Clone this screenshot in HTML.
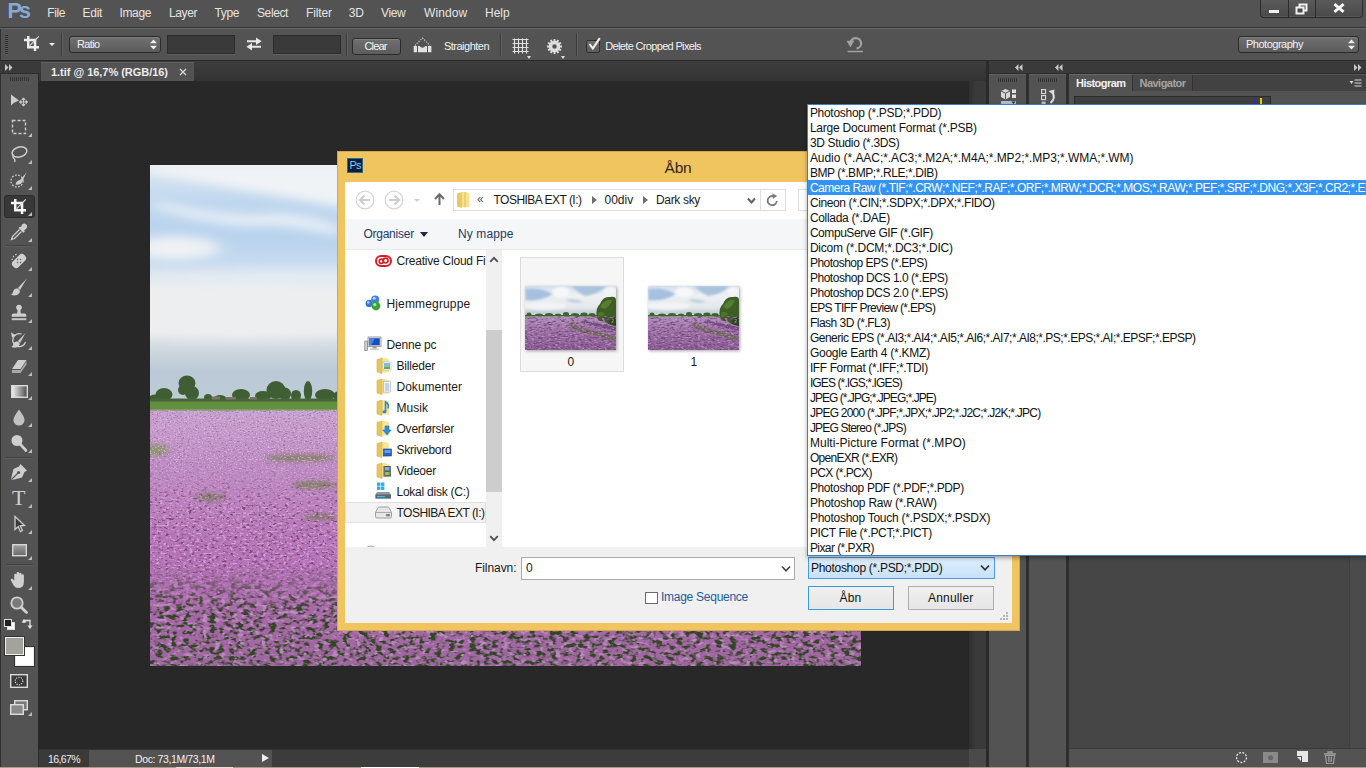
<!DOCTYPE html>
<html lang="da">
<head>
<meta charset="utf-8">
<title>Photoshop - Åbn</title>
<style>
*{box-sizing:border-box;margin:0;padding:0}
html,body{width:1366px;height:768px;overflow:hidden;background:#282828}
body{font-family:"Liberation Sans","DejaVu Sans",sans-serif;font-size:12px;color:#e6e6e6;position:relative}
.abs{position:absolute}
.t{position:absolute;white-space:nowrap}
svg{position:absolute;overflow:visible}
.sel{position:absolute;background:linear-gradient(#707070,#5c5c5c);border:1px solid #2b2b2b;border-radius:3px;box-shadow:inset 0 1px 0 rgba(255,255,255,.12)}
.dark{position:absolute;background:#3a3a3a;border:1px solid #2c2c2c;box-shadow:0 1px 0 rgba(255,255,255,.08)}
.vsep{position:absolute;width:2px;border-left:1px solid #3c3c3c;border-right:1px solid #626262}
.hsep{position:absolute;height:2px;border-top:1px solid #434343;border-bottom:1px solid #5e5e5e}
.tri{position:absolute;width:0;height:0;border-left:4px solid transparent;border-bottom:4px solid #bdbdbd}
</style>
</head>
<body>

<!-- MENU BAR -->
<div class="abs" style="left:0px;top:0px;width:1366px;height:28px;background:#535353;border-bottom:1px solid #353535"></div>
<div class="t" style="left:7.5px;top:-0.75px;font-size:21.5px;line-height:25.5px;color:#86a9d8;font-weight:bold;letter-spacing:-2.899px;">Ps</div>
<div class="t" style="left:47.3px;top:5px;font-size:12px;line-height:16px;color:#e4e4e4;letter-spacing:-0.409px;">File</div>
<div class="t" style="left:82.6px;top:5px;font-size:12px;line-height:16px;color:#e4e4e4;letter-spacing:-0.320px;">Edit</div>
<div class="t" style="left:119.5px;top:5px;font-size:12px;line-height:16px;color:#e4e4e4;letter-spacing:-0.371px;">Image</div>
<div class="t" style="left:169px;top:5px;font-size:12px;line-height:16px;color:#e4e4e4;letter-spacing:-0.404px;">Layer</div>
<div class="t" style="left:214.5px;top:5px;font-size:12px;line-height:16px;color:#e4e4e4;letter-spacing:-0.379px;">Type</div>
<div class="t" style="left:257px;top:5px;font-size:12px;line-height:16px;color:#e4e4e4;letter-spacing:-0.392px;">Select</div>
<div class="t" style="left:306px;top:5px;font-size:12px;line-height:16px;color:#e4e4e4;letter-spacing:-0.111px;">Filter</div>
<div class="t" style="left:348.7px;top:5px;font-size:12px;line-height:16px;color:#e4e4e4;letter-spacing:-0.020px;">3D</div>
<div class="t" style="left:381px;top:5px;font-size:12px;line-height:16px;color:#e4e4e4;letter-spacing:-0.349px;">View</div>
<div class="t" style="left:424px;top:5px;font-size:12px;line-height:16px;color:#e4e4e4;letter-spacing:0.120px;">Window</div>
<div class="t" style="left:485px;top:5px;font-size:12px;line-height:16px;color:#e4e4e4;letter-spacing:0.005px;">Help</div>
<div class="abs" style="left:1260px;top:0px;width:103px;height:18px;background:linear-gradient(#5a5a5a,#4a4a4a);border:1px solid #2c2c2c;border-top:none;border-radius:0 0 4px 4px;box-shadow:inset 0 -1px 0 rgba(255,255,255,.08)"></div>
<div class="abs" style="left:1288px;top:0px;width:1px;height:17px;background:#2c2c2c"></div>
<div class="abs" style="left:1315px;top:0px;width:1px;height:17px;background:#2c2c2c"></div>
<div class="abs" style="left:1269px;top:10px;width:10px;height:3px;background:#f0f0f0"></div>
<svg style="left:1295px;top:3px" width="14" height="12" viewBox="0 0 14 12"><rect x="4.5" y="1.5" width="7" height="6" fill="none" stroke="#f0f0f0" stroke-width="2"/><rect x="1.5" y="4.5" width="7" height="6" fill="#4b4b4b" stroke="#f0f0f0" stroke-width="2"/></svg>
<svg style="left:1333px;top:3px" width="12" height="11" viewBox="0 0 12 11"><path d="M1.4 1.2 L10.6 8.8 M10.6 1.2 L1.4 8.8" stroke="#f4f4f4" stroke-width="2.9" fill="none"/></svg>
<!-- OPTIONS BAR -->
<div class="abs" style="left:0px;top:28px;width:1366px;height:33px;background:#535353;border-top:1px solid #676767;border-bottom:1px solid #2a2a2a"></div>
<div class="abs" style="left:5px;top:35px;width:3px;height:20px;background:repeating-linear-gradient(#2c2c2c 0 1px,#5c5c5c 1px 2px)"></div>
<svg style="left:24px;top:35.5px" width="15" height="15" viewBox="0 0 15 15"><path d="M3 0H5.5V10H15V12.5H3Z M0 2.7H12.3V15H9.8V5.2H0Z" fill="#ececec"/><path d="M5.8 9.7 L14.8 0.4" stroke="#dcdcdc" stroke-width="1.1"/></svg>
<div class="abs" style="left:49px;top:42.7px;width:0px;height:0px;border-left:3.3px solid transparent;border-right:3.3px solid transparent;border-top:3.6px solid #efefef"></div>
<div class="vsep" style="left:61px;top:33px;height:23px"></div>
<div class="sel" style="left:69px;top:36px;width:92px;height:17px"></div>
<div class="t" style="left:77px;top:37px;font-size:11px;line-height:15px;color:#f2f2f2;letter-spacing:-0.636px;">Ratio</div>
<svg style="left:150px;top:39px" width="7" height="11" viewBox="0 0 7 11"><path d="M0 4.2 L3.5 0.5 L7 4.2Z M0 6.8 L3.5 10.5 L7 6.8Z" fill="#f0f0f0"/></svg>
<div class="dark" style="left:167px;top:35px;width:68px;height:19px"></div>
<svg style="left:246px;top:37px" width="16" height="14" viewBox="0 0 16 14"><path d="M1 3.2H10V0.4L15.6 4.2 10 8V5.2H1Z M15 8.8H6V6L0.4 9.8 6 13.6V10.8H15Z" fill="#e8e8e8"/></svg>
<div class="dark" style="left:273px;top:35px;width:68px;height:19px"></div>
<div class="vsep" style="left:346px;top:33px;height:23px"></div>
<div class="sel" style="left:352px;top:38px;width:49px;height:17px"></div>
<div class="t" style="left:364.5px;top:38.5px;font-size:11px;line-height:15px;color:#f4f4f4;letter-spacing:-0.857px;">Clear</div>
<svg style="left:413px;top:36px" width="19" height="17" viewBox="0 0 19 17"><path d="M0.7 10H4V16.2H0.7Z M15 10H18.4V16.2H15Z M5 10 H6.5 Q9.5 13.5 12.5 10 H14 V16.2 H5Z" fill="#e2e2e2"/><path d="M2 9.5 L9.5 2 L17 9.5" fill="none" stroke="#d4d4d4" stroke-width="1.1" stroke-dasharray="1.3 1.3"/></svg>
<div class="t" style="left:444px;top:38.5px;font-size:11px;line-height:15px;color:#f2f2f2;letter-spacing:-0.515px;">Straighten</div>
<div class="vsep" style="left:500px;top:33px;height:23px"></div>
<svg style="left:512px;top:38px" width="17" height="16" viewBox="0 0 17 16"><path d="M0.5 1.5H16.5 M0.5 5.5H16.5 M0.5 9.5H16.5 M0.5 13.5H16.5 M2.5 0.5V15.5 M6.5 0.5V15.5 M10.5 0.5V15.5 M14.5 0.5V15.5" stroke="#e0e0e0" stroke-width="1.15" fill="none"/></svg>
<div class="abs" style="left:527px;top:56px;width:0px;height:0px;border-left:2.5px solid transparent;border-right:2.5px solid transparent;border-top:3px solid #e0e0e0"></div>
<svg style="left:546px;top:37.5px" width="17" height="17" viewBox="-8.5 -8.5 17 17"><path d="M5.60 -1.04 L7.55 -0.89 L7.55 0.89 L5.60 1.04 L5.37 1.90 L6.98 3.00 L6.09 4.55 L4.33 3.70 L3.70 4.33 L4.55 6.09 L3.00 6.98 L1.90 5.37 L1.04 5.60 L0.89 7.55 L-0.89 7.55 L-1.04 5.60 L-1.90 5.37 L-3.00 6.98 L-4.55 6.09 L-3.70 4.33 L-4.33 3.70 L-6.09 4.55 L-6.98 3.00 L-5.37 1.90 L-5.60 1.04 L-7.55 0.89 L-7.55 -0.89 L-5.60 -1.04 L-5.37 -1.90 L-6.98 -3.00 L-6.09 -4.55 L-4.33 -3.70 L-3.70 -4.33 L-4.55 -6.09 L-3.00 -6.98 L-1.90 -5.37 L-1.04 -5.60 L-0.89 -7.55 L0.89 -7.55 L1.04 -5.60 L1.90 -5.37 L3.00 -6.98 L4.55 -6.09 L3.70 -4.33 L4.33 -3.70 L6.09 -4.55 L6.98 -3.00 L5.37 -1.90Z" fill="#dedede"/><circle r="2.2" fill="#535353"/></svg>
<div class="abs" style="left:561px;top:56px;width:0px;height:0px;border-left:2.5px solid transparent;border-right:2.5px solid transparent;border-top:3px solid #e0e0e0"></div>
<div class="vsep" style="left:576px;top:33px;height:23px"></div>
<div class="abs" style="left:586px;top:39.5px;width:14px;height:13px;background:linear-gradient(#6c6c6c,#5c5c5c);border:1px solid #303030;border-radius:2px"></div>
<svg style="left:588px;top:37px" width="13" height="14" viewBox="0 0 13 14"><path d="M1.5 7 L4.8 11.5 L11.8 1.2" fill="none" stroke="#f0f0f0" stroke-width="2.1"/></svg>
<div class="t" style="left:605.3px;top:38.5px;font-size:11px;line-height:15px;color:#f2f2f2;letter-spacing:-0.664px;">Delete Cropped Pixels</div>
<svg style="left:846px;top:36px" width="18" height="17" viewBox="0 0 18 17"><path d="M4.5 7.5 A5.3 5.3 0 1 1 10.5 12.6" fill="none" stroke="#a2a2a2" stroke-width="2.2"/><path d="M0.5 4.8 L8.4 4.6 L4.4 11.2Z" fill="#a2a2a2"/><path d="M1.5 15.5H17" stroke="#a2a2a2" stroke-width="1.5"/></svg>
<div class="sel" style="left:1238px;top:36px;width:121px;height:17px"></div>
<div class="t" style="left:1246px;top:37px;font-size:11px;line-height:15px;color:#f2f2f2;letter-spacing:-0.489px;">Photography</div>
<svg style="left:1348px;top:39px" width="7" height="11" viewBox="0 0 7 11"><path d="M0 4.2 L3.5 0.5 L7 4.2Z M0 6.8 L3.5 10.5 L7 6.8Z" fill="#f0f0f0"/></svg>
<div class="abs" style="left:0px;top:29px;width:1px;height:32px;background:#303030"></div>
<!-- DOCUMENT -->
<div class="abs" style="left:39px;top:61px;width:950px;height:20px;background:linear-gradient(#3d3d3d,#333333)"></div>
<div class="abs" style="left:41px;top:62px;width:153px;height:20px;background:#535353;border-top:1px solid #626262"></div>
<div class="t" style="left:51px;top:64.5px;font-size:11px;line-height:15px;color:#ececec;font-weight:bold;letter-spacing:-0.032px;">1.tif @ 16,7% (RGB/16)</div>
<svg style="left:179px;top:68px" width="8" height="8" viewBox="0 0 8 8"><path d="M1 1 L7 7 M7 1 L1 7" stroke="#d8d8d8" stroke-width="1.3"/></svg>
<div class="abs" style="left:39px;top:81px;width:950px;height:668px;background:#282828"></div>
<div class="abs" style="left:969px;top:81px;width:17px;height:668px;background:linear-gradient(90deg,#2f2f2f,#3a3a3a 40%,#3a3a3a)"></div>
<div class="abs" style="left:986px;top:61px;width:3px;height:707px;background:#2a2a2a"></div>
<div class="abs" style="left:39px;top:749px;width:947px;height:19px;background:#3c3c3c;border-top:1px solid #333"></div>
<div class="abs" style="left:40px;top:750px;width:49px;height:18px;background:#3a3a3a"></div>
<div class="abs" style="left:89px;top:750px;width:183px;height:18px;background:#535353"></div>
<div class="abs" style="left:969px;top:749px;width:17px;height:19px;background:#4a4a4a"></div>
<div class="t" style="left:48px;top:751.75px;font-size:10.5px;line-height:14.5px;color:#f0f0f0;letter-spacing:-0.602px;">16,67%</div>
<div class="t" style="left:135px;top:751.75px;font-size:10.5px;line-height:14.5px;color:#f0f0f0;letter-spacing:-0.393px;">Doc: 73,1M/73,1M</div>
<div class="abs" style="left:262px;top:754px;width:0px;height:0px;border-top:4.5px solid transparent;border-bottom:4.5px solid transparent;border-left:7px solid #f0f0f0"></div>
<!-- TOOLS -->
<div class="abs" style="left:0px;top:61px;width:39px;height:707px;background:#535353;border-right:1px solid #2a2a2a;border-left:1px solid #303030"></div>
<div class="abs" style="left:0px;top:61px;width:39px;height:13px;background:#3a3a3a;border-bottom:1px solid #2e2e2e"></div>
<svg style="left:5px;top:64px" width="8" height="7" viewBox="0 0 8 7"><path d="M0 0 L3.5 3.5 L0 7Z M4 0 L7.5 3.5 L4 7Z" fill="#c8c8c8"/></svg>
<div class="abs" style="left:10px;top:77px;width:19px;height:4px;background:repeating-linear-gradient(90deg,#333 0 1px,transparent 1px 2px)"></div>
<div class="abs" style="left:4px;top:195px;width:31px;height:23px;background:#383838;border:1px solid #2b2b2b;border-radius:3px"></div>
<svg style="left:9px;top:91px" width="20" height="20" viewBox="0 0 20 20"><path d="M2 3.5 L2 14.5 L5 11.8 L10 9.5Z" fill="#cfcfcf"/><path d="M14.5 7.5v7 M11 11h7 M14.5 6.8 l-1.5 1.8h3z M14.5 15.2 l-1.5-1.8h3z M10.3 11 l1.8-1.5v3z M18.7 11 l-1.8-1.5v3z" stroke="#cfcfcf" stroke-width=".9" fill="#cfcfcf"/></svg>
<svg style="left:9px;top:117px" width="20" height="20" viewBox="0 0 20 20"><rect x="3.5" y="3.5" width="13" height="13" fill="none" stroke="#cfcfcf" stroke-width="1.4" stroke-dasharray="3 2"/></svg>
<div class="tri" style="left:28px;top:133px"></div>
<svg style="left:9px;top:144px" width="20" height="20" viewBox="0 0 20 20"><ellipse cx="10.5" cy="8" rx="7.5" ry="5" fill="none" stroke="#cfcfcf" stroke-width="1.5" transform="rotate(-15 10.5 8)"/><path d="M4.5 10.5 q-1.5 2.5 0.5 4 q1.5 1 0.5 3.5" fill="none" stroke="#cfcfcf" stroke-width="1.3"/></svg>
<div class="tri" style="left:28px;top:160px"></div>
<svg style="left:9px;top:170px" width="20" height="20" viewBox="0 0 20 20"><circle cx="8" cy="11" r="6" fill="none" stroke="#cfcfcf" stroke-width="1.3" stroke-dasharray="1.6 1.6"/><path d="M17.5 2.5 L11 10 L13 12Z" fill="#cfcfcf"/><path d="M11.5 10 q-4 0-5 4.5 q5 1 7-2.5z" fill="#cfcfcf"/></svg>
<div class="tri" style="left:28px;top:186px"></div>
<svg style="left:11px;top:198.5px" width="15" height="15" viewBox="0 0 15 15"><path d="M3 0H5.5V10H15V12.5H3Z M0 2.7H12.3V15H9.8V5.2H0Z" fill="#f4f4f4"/><path d="M5.8 9.7 L14.8 0.4" stroke="#e4e4e4" stroke-width="1.1"/></svg>
<div class="tri" style="left:28px;top:212px"></div>
<svg style="left:9px;top:222px" width="20" height="20" viewBox="0 0 20 20"><path d="M13 2.5 q2.5-2 4.3 0 q1.8 2-0.2 4.3 l-2 1.6 l0.8 1 l-1.5 1.4 l-4.8-4.8 l1.4-1.5 l1 0.8z" fill="#cfcfcf"/><path d="M10.5 7.5 L3.5 14.5 L2.5 17.5 L5.5 16.5 L12.5 9.5" fill="none" stroke="#cfcfcf" stroke-width="1.3"/></svg>
<div class="tri" style="left:28px;top:238px"></div>
<div class="hsep" style="left:6px;top:245px;width:27px"></div>
<svg style="left:9px;top:251px" width="20" height="20" viewBox="0 0 20 20"><rect x="6" y="2" width="8" height="16" rx="3.5" fill="#cfcfcf" transform="rotate(45 10 10)"/><circle cx="8.5" cy="8.5" r=".7" fill="#535353"/><circle cx="11.5" cy="11.5" r=".7" fill="#535353"/><circle cx="11.5" cy="8.5" r=".7" fill="#535353"/><circle cx="8.5" cy="11.5" r=".7" fill="#535353"/><path d="M3 9 a7 7 0 0 1 6-6" fill="none" stroke="#cfcfcf" stroke-width="1.1" stroke-dasharray="1.5 1.5"/></svg>
<div class="tri" style="left:28px;top:267px"></div>
<svg style="left:9px;top:277px" width="20" height="20" viewBox="0 0 20 20"><path d="M17.8 1.5 L9 11 L11 13 Z" fill="#cfcfcf"/><path d="M8.8 11.5 q-4-0.5-4.8 3.5 q-0.3 2-2.2 2.6 q5 2.2 8.2-1 q1.6-1.8 0.6-3.4z" fill="#cfcfcf"/></svg>
<div class="tri" style="left:28px;top:293px"></div>
<svg style="left:9px;top:303px" width="20" height="20" viewBox="0 0 20 20"><circle cx="10" cy="4.6" r="2.8" fill="#cfcfcf"/><path d="M8.8 6 h2.4 l.6 4.5 h3.7 q1.8 0 1.8 1.8 v1.5 H2.7 v-1.5 q0-1.8 1.8-1.8 h3.7z" fill="#cfcfcf"/><rect x="2.7" y="15.2" width="14.6" height="2" fill="#c8c8c8"/></svg>
<div class="tri" style="left:28px;top:319px"></div>
<svg style="left:9px;top:330px" width="20" height="20" viewBox="0 0 20 20"><path d="M16.5 3 L9 11 L11 13Z" fill="#cfcfcf"/><path d="M9 11.5 q-4-0.5-4.8 3 q-.3 1.8-2 2.4 q4.6 2 7.6-.8 q1.6-1.6.6-3.2z" fill="#cfcfcf"/><path d="M12.5 4 a6.5 6.5 0 1 0 4 8" fill="none" stroke="#cfcfcf" stroke-width="1.3"/><path d="M2 2.5 l1 5 l4.5-2z" fill="#cfcfcf"/></svg>
<div class="tri" style="left:28px;top:346px"></div>
<svg style="left:9px;top:356px" width="20" height="20" viewBox="0 0 20 20"><path d="M9 4 L17.5 4 L11.5 13 L3 13Z" fill="#cfcfcf"/><path d="M3 14 L11.5 14 L17.5 5 L17.5 8.5 L11.5 17 L3 17Z" fill="#a8a8a8"/></svg>
<div class="tri" style="left:28px;top:372px"></div>
<svg style="left:10.5px;top:384.5px" width="17" height="13" viewBox="0 0 17 13"><defs><linearGradient id="tg" x1="0" x2="1" y1="0" y2="0"><stop offset="0" stop-color="#f4f4f4"/><stop offset="1" stop-color="#4a4a4a"/></linearGradient></defs><rect x=".7" y=".7" width="15.6" height="11.6" fill="url(#tg)" stroke="#dadada" stroke-width="1.4"/></svg>
<div class="tri" style="left:28px;top:396px"></div>
<svg style="left:9px;top:407px" width="20" height="20" viewBox="0 0 20 20"><path d="M10 2.5 q-5.6 7.5-5.6 10.5 a5.6 5.6 0 0 0 11.2 0 q0-3-5.6-10.5z" fill="#c2c2c2"/></svg>
<div class="tri" style="left:28px;top:423px"></div>
<svg style="left:9px;top:433px" width="20" height="20" viewBox="0 0 20 20"><circle cx="8" cy="7.5" r="5.5" fill="#cfcfcf"/><path d="M11.5 11.5 L17 17.5" stroke="#cfcfcf" stroke-width="2.6" stroke-linecap="round"/></svg>
<div class="tri" style="left:28px;top:449px"></div>
<div class="hsep" style="left:6px;top:457px;width:27px"></div>
<svg style="left:9px;top:462px" width="20" height="20" viewBox="0 0 20 20"><path d="M11.5 2 L18 8.5 L15.5 10 L13 15.5 L3 18 L2 17 L4.5 7 L10 4.5Z" fill="#cfcfcf"/><path d="M2.5 17.5 L9 11" stroke="#535353" stroke-width="1.1"/><circle cx="9.6" cy="10.4" r="1.5" fill="#535353"/></svg>
<div class="tri" style="left:28px;top:478px"></div>
<div class="t" style="left:12px;top:485px;font-size:22px;line-height:26px;color:#cfcfcf;font-family:'Liberation Serif',serif;">T</div>
<div class="tri" style="left:28px;top:504px"></div>
<svg style="left:9px;top:514px" width="20" height="20" viewBox="0 0 20 20"><path d="M6 2.5 L6 15.5 L9.2 12.6 L11.4 17.5 L13.4 16.5 L11.2 11.8 L15.5 11.5Z" fill="#3a3a3a" stroke="#cfcfcf" stroke-width="1.3"/></svg>
<div class="tri" style="left:28px;top:530px"></div>
<svg style="left:11.5px;top:543.5px" width="15" height="13" viewBox="0 0 15 13"><defs><linearGradient id="rg" x1="0" x2="0" y1="0" y2="1"><stop offset="0" stop-color="#a0a0a0"/><stop offset="1" stop-color="#6a6a6a"/></linearGradient></defs><rect x=".7" y=".7" width="13.6" height="11" fill="url(#rg)" stroke="#d6d6d6" stroke-width="1.4"/></svg>
<div class="tri" style="left:28px;top:556px"></div>
<div class="hsep" style="left:6px;top:564px;width:27px"></div>
<svg style="left:9px;top:570px" width="20" height="20" viewBox="0 0 20 20"><path d="M5.2 10.5 V5 q0-1.3 1.2-1.3 q1.2 0 1.2 1.3 V3.2 q0-1.3 1.2-1.3 q1.3 0 1.3 1.3 V4 q0-1.3 1.2-1.3 q1.2 0 1.2 1.3 V5.5 q0-1.2 1.2-1.2 q1.2 0 1.2 1.2 V12 q0 6-5.6 6 q-3 0-4.6-2.6 L2 10.5 q-.6-1.2.5-1.7 q1-.4 1.7.6z" fill="#cfcfcf"/></svg>
<div class="tri" style="left:28px;top:586px"></div>
<svg style="left:9px;top:595px" width="20" height="20" viewBox="0 0 20 20"><circle cx="8" cy="8" r="5.7" fill="#7a7a7a" stroke="#cfcfcf" stroke-width="1.8"/><path d="M12.2 12.2 L17.5 17.5" stroke="#cfcfcf" stroke-width="2.8" stroke-linecap="round"/></svg>
<svg style="left:4px;top:619px" width="11" height="11" viewBox="0 0 11 11"><rect x="3.5" y="3.5" width="7" height="7" fill="#fff" stroke="#ddd"/><rect x=".5" y=".5" width="7" height="7" fill="#222" stroke="#ddd"/></svg>
<svg style="left:21px;top:618px" width="12" height="12" viewBox="0 0 12 12"><path d="M3 5 V2.5 H9 V8" fill="none" stroke="#e6e6e6" stroke-width="1.3"/><path d="M.5 4.5 L3 1 L5.5 4.5Z M6.5 7.5 L9 11 L11.5 7.5Z" fill="#e6e6e6" transform="translate(0,0)"/></svg>
<div class="abs" style="left:15px;top:647px;width:19px;height:19px;background:#fff;border:1px solid #e8e8e8;box-shadow:0 0 0 1px #333"></div>
<div class="abs" style="left:5px;top:637px;width:19px;height:18px;background:#a3a39b;border:1px solid #efefef;box-shadow:0 0 0 1px #333"></div>
<svg style="left:10px;top:674px" width="18" height="14" viewBox="0 0 18 14"><rect x=".7" y=".7" width="16.6" height="12.6" fill="#3a3a3a" stroke="#dcdcdc" stroke-width="1.4"/><circle cx="9" cy="7" r="3.8" fill="none" stroke="#e6e6e6" stroke-width="1.1" stroke-dasharray="1.2 1.2"/></svg>
<svg style="left:10px;top:700px" width="18" height="15" viewBox="0 0 18 15"><rect x="4.7" y=".7" width="12.6" height="9" fill="#7a7a7a" stroke="#dcdcdc" stroke-width="1.4"/><rect x=".7" y="4.7" width="12.6" height="9.6" fill="#8a8a8a" stroke="#dcdcdc" stroke-width="1.4"/></svg>
<div class="tri" style="left:28px;top:712px"></div>
<!-- PHOTO -->
<svg style="left:150px;top:165px;overflow:hidden" width="711" height="501" viewBox="0 0 711 501">
<defs>
<linearGradient id="sky" x1="0" y1="0" x2="0" y2="1">
<stop offset="0" stop-color="#e6ecf3"/><stop offset=".06" stop-color="#d2e1f0"/><stop offset=".15" stop-color="#bfd7ee"/>
<stop offset=".30" stop-color="#b9d3ed"/><stop offset=".39" stop-color="#c4daef"/><stop offset=".45" stop-color="#e0e8ef"/>
<stop offset=".52" stop-color="#ebeef0"/><stop offset=".68" stop-color="#e6e9ec"/><stop offset=".76" stop-color="#ced7df"/>
<stop offset=".84" stop-color="#bbc9d6"/><stop offset=".93" stop-color="#bdcbd7"/><stop offset="1" stop-color="#c8d3dc"/>
</linearGradient>
<linearGradient id="fld" x1="0" y1="0" x2="0" y2="1">
<stop offset="0" stop-color="#c9a2cd"/><stop offset=".18" stop-color="#c08fc5"/><stop offset=".5" stop-color="#b775ba"/>
<stop offset=".8" stop-color="#b06ab2"/><stop offset="1" stop-color="#ad6cb0"/>
</linearGradient>
<linearGradient id="dk" x1="0" y1="400" x2="0" y2="501" gradientUnits="userSpaceOnUse"><stop offset="0" stop-color="#2e3a22" stop-opacity="0"/><stop offset="1" stop-color="#2e3a22" stop-opacity=".12"/></linearGradient>
<linearGradient id="fade" x1="0" y1="0" x2="0" y2="1"><stop offset="0" stop-color="#fff" stop-opacity="0"/><stop offset="1" stop-color="#fff" stop-opacity="1"/></linearGradient>
<filter id="blur8" x="-20%" y="-50%" width="140%" height="200%"><feGaussianBlur stdDeviation="9 5"/></filter>
<filter id="blur3" x="-20%" y="-50%" width="140%" height="200%"><feGaussianBlur stdDeviation="3 2"/></filter>
<filter id="nd1" color-interpolation-filters="sRGB" x="0" y="0" width="100%" height="100%"><feTurbulence type="fractalNoise" baseFrequency="0.42 0.8" numOctaves="2" seed="11"/><feColorMatrix type="matrix" values="0 0 0 0 0.58  0 0 0 0 0.42  0 0 0 0 0.60  5 0 0 0 -2.8"/></filter>
<filter id="nl1" color-interpolation-filters="sRGB" x="0" y="0" width="100%" height="100%"><feTurbulence type="fractalNoise" baseFrequency="0.5 0.9" numOctaves="2" seed="4"/><feColorMatrix type="matrix" values="0 0 0 0 0.88  0 0 0 0 0.74  0 0 0 0 0.90  0 5 0 0 -2.7"/></filter>
<filter id="nd2" color-interpolation-filters="sRGB" x="0" y="0" width="100%" height="100%"><feTurbulence type="fractalNoise" baseFrequency="0.26 0.45" numOctaves="2" seed="21"/><feColorMatrix type="matrix" values="0 0 0 0 0.40  0 0 0 0 0.27  0 0 0 0 0.38  5 0 0 0 -2.75"/></filter>
<filter id="nl2" color-interpolation-filters="sRGB" x="0" y="0" width="100%" height="100%"><feTurbulence type="fractalNoise" baseFrequency="0.3 0.5" numOctaves="2" seed="9"/><feColorMatrix type="matrix" values="0 0 0 0 0.86  0 0 0 0 0.66  0 0 0 0 0.86  0 5 0 0 -2.7"/></filter>
<filter id="nd3" color-interpolation-filters="sRGB" x="0" y="0" width="100%" height="100%"><feTurbulence type="fractalNoise" baseFrequency="0.15 0.24" numOctaves="2" seed="31"/><feColorMatrix type="matrix" values="0 0 0 0 0.20  0 0 0 0 0.27  0 0 0 0 0.15  5.5 0 0 0 -2.55"/></filter>
<filter id="nl3" color-interpolation-filters="sRGB" x="0" y="0" width="100%" height="100%"><feTurbulence type="fractalNoise" baseFrequency="0.17 0.26" numOctaves="2" seed="17"/><feColorMatrix type="matrix" values="0 0 0 0 0.78  0 0 0 0 0.58  0 0 0 0 0.80  0 5 0 0 -2.7"/></filter>
<linearGradient id="g1" x1="0" y1="245" x2="0" y2="501" gradientUnits="userSpaceOnUse"><stop offset="0" stop-color="#fff"/><stop offset=".2" stop-color="#fff"/><stop offset=".38" stop-color="#000"/></linearGradient>
<linearGradient id="g2" x1="0" y1="245" x2="0" y2="501" gradientUnits="userSpaceOnUse"><stop offset=".2" stop-color="#000"/><stop offset=".38" stop-color="#fff"/><stop offset=".6" stop-color="#fff"/><stop offset=".78" stop-color="#000"/></linearGradient>
<linearGradient id="g3" x1="0" y1="245" x2="0" y2="501" gradientUnits="userSpaceOnUse"><stop offset=".6" stop-color="#000"/><stop offset=".78" stop-color="#fff"/><stop offset="1" stop-color="#fff"/></linearGradient>
<mask id="m1"><rect x="0" y="245" width="711" height="256" fill="url(#g1)"/></mask>
<mask id="m2"><rect x="0" y="245" width="711" height="256" fill="url(#g2)"/></mask>
<mask id="m3"><rect x="0" y="245" width="711" height="256" fill="url(#g3)"/></mask>
<mask id="fm"><rect x="0" y="245" width="711" height="256" fill="url(#fade)"/></mask>
</defs>
<rect width="711" height="245" fill="url(#sky)"/>
<g filter="url(#blur8)">
<path d="M0 0 H711 V70 Q400 70 190 42 Q80 22 0 8Z" fill="#f0f3f6"/>
<path d="M5 35 Q60 50 110 50 Q150 45 190 62 L190 72 Q140 57 100 61 Q50 58 5 43Z" fill="#e6eef6"/>
<ellipse cx="25" cy="83" rx="45" ry="12" fill="#eef1f5"/>
<ellipse cx="150" cy="118" rx="110" ry="9" fill="#e2ebf4"/>
<ellipse cx="90" cy="145" rx="190" ry="28" fill="#eceef0"/>
<ellipse cx="520" cy="150" rx="260" ry="30" fill="#e9ecef"/>
</g>
<!-- tree line -->
<g fill="#405e33">
<ellipse cx="14" cy="229.5" rx="8.5" ry="6.5"/><ellipse cx="5" cy="233" rx="6" ry="3.5"/>
<ellipse cx="37" cy="218" rx="8.5" ry="7.5"/><ellipse cx="42" cy="228" rx="7" ry="7"/><ellipse cx="33" cy="225" rx="5" ry="5"/>
<ellipse cx="58" cy="232.5" rx="4" ry="3.5"/><ellipse cx="70" cy="233" rx="6" ry="3"/>
<ellipse cx="91" cy="230" rx="9" ry="6"/>
<ellipse cx="113" cy="231" rx="8" ry="5"/><ellipse cx="126" cy="225" rx="9.5" ry="9"/><ellipse cx="135" cy="229" rx="6" ry="6.5"/>
<ellipse cx="146" cy="230.5" rx="5" ry="5.5"/><ellipse cx="158" cy="226" rx="4.2" ry="10"/><ellipse cx="175" cy="230" rx="10" ry="6"/><ellipse cx="190" cy="231" rx="7" ry="5"/>
<rect x="0" y="233.5" width="711" height="4" fill="#46663a"/>
<ellipse cx="260" cy="230" rx="40" ry="6"/><ellipse cx="400" cy="231" rx="60" ry="5"/><ellipse cx="600" cy="230" rx="80" ry="6"/>
</g>
<g fill="#7b766c"><rect x="62" y="231.5" width="8" height="3"/><rect x="76" y="232" width="10" height="2.5"/><rect x="100" y="232" width="7" height="2.5"/></g>
<rect x="0" y="236.5" width="711" height="9" fill="#62903f"/>
<rect x="0" y="244" width="711" height="2" fill="#8aa06a" opacity=".7"/>
<!-- flower field -->
<rect x="0" y="245.5" width="711" height="256" fill="url(#fld)"/>
<g filter="url(#blur3)" fill="#6f7d4a" opacity=".75">
<ellipse cx="7" cy="285" rx="11" ry="6" fill="#7d9a50"/><ellipse cx="150" cy="293" rx="36" ry="3.5"/><ellipse cx="165" cy="320" rx="22" ry="4"/>
<ellipse cx="60" cy="332" rx="14" ry="4"/><ellipse cx="170" cy="352" rx="16" ry="3"/>
</g>
<g mask="url(#m1)" opacity=".7"><rect x="0" y="245.5" width="711" height="256" filter="url(#nd1)"/><rect x="0" y="245.5" width="711" height="256" filter="url(#nl1)"/></g>
<g mask="url(#m2)" opacity=".85"><rect x="0" y="245.5" width="711" height="256" filter="url(#nd2)"/><rect x="0" y="245.5" width="711" height="256" filter="url(#nl2)"/></g>
<g mask="url(#m3)"><rect x="0" y="245.5" width="711" height="256" filter="url(#nd3)"/><rect x="0" y="245.5" width="711" height="256" filter="url(#nl3)"/></g>
<rect x="0" y="400" width="711" height="101" fill="url(#dk)"/>
</svg>
<!-- RIGHT PANELS -->
<div class="abs" style="left:989px;top:61px;width:377px;height:707px;background:#2e2e2e"></div>
<div class="abs" style="left:989px;top:61px;width:377px;height:13px;background:#3a3a3a;border-bottom:1px solid #2c2c2c"></div>
<svg style="left:1015px;top:64px" width="8" height="7" viewBox="0 0 8 7"><path d="M3.5 0 L0 3.5 L3.5 7Z M7.5 0 L4 3.5 L7.5 7Z" fill="#c8c8c8"/></svg>
<svg style="left:1055px;top:64px" width="8" height="7" viewBox="0 0 8 7"><path d="M3.5 0 L0 3.5 L3.5 7Z M7.5 0 L4 3.5 L7.5 7Z" fill="#c8c8c8"/></svg>
<svg style="left:1354px;top:64px" width="8" height="7" viewBox="0 0 8 7"><path d="M0 0 L3.5 3.5 L0 7Z M4 0 L7.5 3.5 L4 7Z" fill="#c8c8c8"/></svg>
<div class="abs" style="left:989px;top:74px;width:37px;height:694px;background:#535353;border-top:1px solid #626262"></div>
<div class="abs" style="left:1029px;top:74px;width:37px;height:694px;background:#535353;border-top:1px solid #626262"></div>
<div class="abs" style="left:998px;top:78px;width:19px;height:4px;background:repeating-linear-gradient(90deg,#333 0 1px,transparent 1px 2px)"></div>
<div class="abs" style="left:1038px;top:78px;width:19px;height:4px;background:repeating-linear-gradient(90deg,#333 0 1px,transparent 1px 2px)"></div>
<svg style="left:1000px;top:88px" width="17" height="16" viewBox="0 0 17 16"><path d="M5.5 1 L10 3 V9 L5.5 11.5 L1 9 V3Z" fill="#d8d8d8"/><path d="M1 3 L5.5 5.2 L10 3 M5.5 5.2 V11.5" stroke="#535353" stroke-width="1" fill="none"/><rect x="12" y="1.5" width="4" height="3.5" fill="#e2e2e2"/><rect x="12" y="6.5" width="4" height="3.5" fill="#e2e2e2"/><rect x="1" y="13" width="15" height="3" fill="#aebfd6"/><path d="M11.5 13.6 L15.5 13.6 L13.5 16Z" fill="#222"/></svg>
<svg style="left:1041px;top:88px" width="17" height="16" viewBox="0 0 17 16"><rect x=".6" y="1.6" width="4" height="4" fill="none" stroke="#dcdcdc" stroke-width="1.1"/><rect x=".6" y="7.6" width="4" height="4" fill="none" stroke="#dcdcdc" stroke-width="1.1"/><rect x=".6" y="13.6" width="4" height="3" fill="#aebfd6"/><path d="M9.5 15 Q15 10 11.5 4.5" fill="none" stroke="#dcdcdc" stroke-width="2"/><path d="M7.5 3 L13.5 1.5 L13 7.5Z" fill="#dcdcdc"/></svg>
<div class="abs" style="left:1069px;top:74px;width:297px;height:17px;background:#424242;border-top:1px solid #555"></div>
<div class="abs" style="left:1069px;top:74px;width:63px;height:17px;background:#535353;border-top:1px solid #676767"></div>
<div class="abs" style="left:1132px;top:75px;width:61px;height:16px;background:#484848;border-left:1px solid #333;border-right:1px solid #333"></div>
<div class="abs" style="left:1069px;top:91px;width:297px;height:677px;background:#535353"></div>
<div class="t" style="left:1076px;top:75.5px;font-size:11px;line-height:15px;color:#f2f2f2;font-weight:bold;letter-spacing:-0.544px;">Histogram</div>
<div class="t" style="left:1139.5px;top:75.5px;font-size:11px;line-height:15px;color:#a4a4a4;font-weight:bold;letter-spacing:-0.526px;">Navigator</div>
<svg style="left:1348.5px;top:78.5px" width="13" height="8" viewBox="0 0 12 8"><path d="M0 2 L4 2 L2 5Z" fill="#d8d8d8"/><path d="M5 1H12 M5 4H12 M5 7H12" stroke="#d8d8d8" stroke-width="1.1"/></svg>
<div class="abs" style="left:1074px;top:96px;width:197px;height:60px;background:#3f3f3f;border:1px solid #2b2b2b"></div>
<div class="abs" style="left:1254px;top:98px;width:2px;height:10px;background:#2b2bd0"></div>
<div class="abs" style="left:1260px;top:98px;width:1.5px;height:10px;background:#e4d200"></div>
<div class="abs" style="left:1069px;top:540px;width:281px;height:209px;background:#464646"></div>
<div class="abs" style="left:1349px;top:540px;width:17px;height:209px;background:#4b4b4b;border-left:1px solid #3e3e3e"></div>
<div class="abs" style="left:1069px;top:748px;width:297px;height:20px;background:#535353;border-top:1px solid #3a3a3a"></div>
<svg style="left:1235px;top:751px" width="13" height="13" viewBox="0 0 13 13"><circle cx="6.5" cy="6.5" r="5" fill="none" stroke="#e8e8e8" stroke-width="1.3" stroke-dasharray="2 1.4"/></svg>
<svg style="left:1263px;top:752px" width="15" height="11" viewBox="0 0 15 11"><rect width="15" height="11" fill="#8a8a8a"/><circle cx="7.5" cy="5.7" r="2.5" fill="#666"/></svg>
<svg style="left:1296px;top:751px" width="12" height="12" viewBox="0 0 12 12"><rect x="1" y="0" width="11" height="11" fill="#e6e6e6"/><rect x="0" y="5" width="6" height="7" fill="#535353"/><path d="M1 6 L5 10 L5 6Z" fill="#e6e6e6"/></svg>
<svg style="left:1324px;top:751px" width="12" height="13" viewBox="0 0 12 13"><path d="M0 3H12 M4 3V1H8V3" stroke="#9c9c9c" stroke-width="1.3" fill="none"/><path d="M1.5 4.5 L2.5 12.5 H9.5 L10.5 4.5Z" fill="none" stroke="#9c9c9c" stroke-width="1.2"/><path d="M4.5 5.5V11 M6 5.5V11 M7.5 5.5V11" stroke="#9c9c9c" stroke-width=".9"/></svg>
<div class="abs" style="left:0px;top:767px;width:1366px;height:1px;background:#a89d80"></div>
<div class="abs" style="left:176px;top:767px;width:57px;height:1px;background:#e6e2d6"></div>
<div class="abs" style="left:361px;top:767px;width:58px;height:1px;background:#ffffff"></div>
<!-- DIALOG -->
<div class="abs" style="left:337px;top:151px;width:683px;height:480px;background:#f0c45e;border:1px solid #d3a84a"></div>
<div class="abs" style="left:345px;top:182px;width:667px;height:441px;background:#f0f0f0;border-top:1px solid #c9a550"></div>
<div class="abs" style="left:347px;top:158px;width:16px;height:15px;background:#0a1f3c;border:1px solid #2f6a8c"></div>
<div class="t" style="left:349.5px;top:158px;font-size:11px;line-height:15px;color:#7fcdf8;letter-spacing:-0.918px;">Ps</div>
<div class="t" style="left:664.5px;top:157.75px;font-size:15.5px;line-height:19.5px;color:#30281a;letter-spacing:-0.193px;">Åbn</div>
<div class="abs" style="left:345px;top:182px;width:667px;height:37px;background:#ffffff"></div>
<svg style="left:354.8px;top:189.7px" width="20" height="20" viewBox="0 0 20 20"><circle cx="10" cy="10" r="8.8" fill="#fff" stroke="#d6d6d6" stroke-width="1.2"/><path d="M15 10H5.5 M9.5 5.5 L5 10 L9.5 14.5" fill="none" stroke="#cdcdcd" stroke-width="2.2"/></svg>
<svg style="left:383.5px;top:189.7px" width="20" height="20" viewBox="0 0 20 20"><circle cx="10" cy="10" r="8.8" fill="#fff" stroke="#d6d6d6" stroke-width="1.2"/><path d="M5 10H14.5 M10.5 5.5 L15 10 L10.5 14.5" fill="none" stroke="#cdcdcd" stroke-width="2.2"/></svg>
<div class="abs" style="left:413.5px;top:198.5px;width:0px;height:0px;border-left:3.5px solid transparent;border-right:3.5px solid transparent;border-top:3.5px solid #cfcfcf"></div>
<svg style="left:433px;top:192px" width="13" height="15" viewBox="0 0 13 15"><path d="M6.5 13V2.5 M2 7 L6.5 2.2 L11 7" fill="none" stroke="#6a6a6a" stroke-width="2"/></svg>
<div class="abs" style="left:453px;top:189px;width:308px;height:22px;background:#fff;border:1px solid #dedede"></div>
<div class="abs" style="left:760px;top:189px;width:26px;height:22px;background:#fff;border:1px solid #dedede"></div>
<div class="abs" style="left:798px;top:189px;width:214px;height:22px;background:#fff;border:1px solid #dedede"></div>
<svg style="left:456px;top:191px" width="15" height="18" viewBox="0 0 15 18"><path d="M1 2.5 L6 1 V17 L1 15.5Z" fill="#e9c962"/><path d="M6 1 H10 L13.5 2.5 V16 H6Z" fill="#f6e38f"/><path d="M9 1.5 V16.5" stroke="#d9bd5a" stroke-width="1"/></svg>
<div class="t" style="left:477px;top:191px;font-size:12px;line-height:16px;color:#555;">«</div>
<div class="t" style="left:493.5px;top:192px;font-size:12px;line-height:16px;color:#1a1a1a;letter-spacing:-0.516px;">TOSHIBA EXT (I:)</div>
<div class="abs" style="left:592px;top:195.5px;width:0px;height:0px;border-top:4.5px solid transparent;border-bottom:4.5px solid transparent;border-left:5px solid #6e6e6e"></div>
<div class="t" style="left:604.6px;top:192px;font-size:12px;line-height:16px;color:#1a1a1a;letter-spacing:-0.038px;">00div</div>
<div class="abs" style="left:643px;top:195.5px;width:0px;height:0px;border-top:4.5px solid transparent;border-bottom:4.5px solid transparent;border-left:5px solid #6e6e6e"></div>
<div class="t" style="left:656px;top:192px;font-size:12px;line-height:16px;color:#1a1a1a;letter-spacing:-0.334px;">Dark sky</div>
<svg style="left:746.5px;top:196.5px" width="9" height="8" viewBox="0 0 9 8"><path d="M1 1.5 L4.5 5.5 L8 1.5" fill="none" stroke="#606060" stroke-width="2"/></svg>
<svg style="left:766px;top:193px" width="13" height="14" viewBox="0 0 13 14"><path d="M10.8 8 A4.6 4.6 0 1 1 7.5 3.2" fill="none" stroke="#7c7c7c" stroke-width="1.8"/><path d="M6.5 0.3 L11.2 3 L6.8 6Z" fill="#7c7c7c"/></svg>
<div class="abs" style="left:345px;top:219px;width:667px;height:31px;background:#f5f6f7;border-bottom:1px solid #e8e9ea"></div>
<div class="t" style="left:363.4px;top:226px;font-size:12px;line-height:16px;color:#1e3a68;letter-spacing:-0.243px;">Organiser</div>
<div class="abs" style="left:419.5px;top:232px;width:0px;height:0px;border-left:4.5px solid transparent;border-right:4.5px solid transparent;border-top:5px solid #1e2a3c"></div>
<div class="t" style="left:458px;top:226px;font-size:12px;line-height:16px;color:#1e3a68;letter-spacing:0.101px;">Ny mappe</div>
<div class="abs" style="left:345px;top:250px;width:141px;height:297px;background:#fff"></div>
<div class="abs" style="left:486px;top:250px;width:16px;height:297px;background:#f0f0f0"></div>
<div class="abs" style="left:486px;top:330px;width:16px;height:162px;background:#cdcdcd"></div>
<svg style="left:489px;top:256px" width="10" height="7" viewBox="0 0 10 7"><path d="M1.2 5.8 L5 1.8 L8.8 5.8" fill="none" stroke="#505050" stroke-width="1.8"/></svg>
<svg style="left:489px;top:535px" width="10" height="7" viewBox="0 0 10 7"><path d="M1.2 1.2 L5 5.2 L8.8 1.2" fill="none" stroke="#505050" stroke-width="1.8"/></svg>
<div class="abs" style="left:502px;top:250px;width:510px;height:297px;background:#fff"></div>
<div class="abs" style="left:345px;top:502px;width:141px;height:21px;background:#f3f3f3;border:1px solid #e0e0e0"></div>
<svg style="left:375px;top:254.5px" width="17" height="12" viewBox="0 0 17 12"><rect x="1" y="1" width="15" height="10" rx="5" fill="none" stroke="#d81f26" stroke-width="2"/><circle cx="6.3" cy="6.3" r="2.1" fill="none" stroke="#d81f26" stroke-width="1.7"/><circle cx="10.6" cy="5.6" r="2.4" fill="none" stroke="#d81f26" stroke-width="1.7"/></svg>
<div class="t" style="left:396.5px;top:252.7px;font-size:12px;line-height:16px;color:#1a1a1a;letter-spacing:-0.218px;">Creative Cloud Fi</div>
<svg style="left:364.5px;top:295px" width="17" height="16" viewBox="0 0 17 16"><circle cx="4.2" cy="8.4" r="3.6" fill="#3b78d0"/><circle cx="3.3" cy="7.4" r="1.3" fill="#a8c8f0"/><circle cx="10.2" cy="4.4" r="4" fill="#3f82dc"/><circle cx="9.2" cy="3.3" r="1.5" fill="#b4d2f6"/><circle cx="11" cy="11" r="4.4" fill="#3da436"/><circle cx="9.8" cy="9.6" r="1.6" fill="#b0e6a6"/></svg>
<div class="t" style="left:386.4px;top:295.5px;font-size:12px;line-height:16px;color:#1a1a1a;letter-spacing:0.163px;">Hjemmegruppe</div>
<svg style="left:364px;top:336px" width="18" height="16" viewBox="0 0 18 16"><rect x="4" y="1" width="13" height="9.5" fill="#e8e8e8" stroke="#8a8a8a" stroke-width=".8"/><rect x="5.2" y="2.2" width="10.6" height="7.1" fill="#1b4fc0"/><path d="M5.2 2.2 H11 L7 9.3 H5.2Z" fill="#4f86e6"/><rect x="8.5" y="10.5" width="4" height="2" fill="#9a9a9a"/><rect x="6" y="12.5" width="9" height="1.5" fill="#c8c8c8"/><rect x="0.8" y="5" width="2.6" height="9.5" fill="#d0d0d0" stroke="#7d7d7d" stroke-width=".7"/></svg>
<div class="t" style="left:386.4px;top:336.5px;font-size:12px;line-height:16px;color:#1a1a1a;letter-spacing:-0.171px;">Denne pc</div>
<svg style="left:376px;top:357px" width="16" height="17" viewBox="0 0 16 17"><path d="M1 2.5 L6 1 V16.5 L1 15Z" fill="#e6c55d"/><path d="M6 1 H9.5 L13 2.5 V15.5 H6Z" fill="#f7e696"/><path d="M1 2.5 L6 1 V16.5 L1 15Z" fill="none" stroke="#d2b455" stroke-width=".6"/><rect x="7" y="5" width="8" height="8" fill="#fff" stroke="#9bb" stroke-width=".6"/><rect x="8" y="6" width="6" height="3.5" fill="#7db9e8"/><rect x="8" y="9.5" width="6" height="2.5" fill="#6aa84f"/></svg>
<div class="t" style="left:396.5px;top:357.7px;font-size:12px;line-height:16px;color:#1a1a1a;letter-spacing:-0.190px;">Billeder</div>
<svg style="left:376px;top:378px" width="16" height="17" viewBox="0 0 16 17"><path d="M1 2.5 L6 1 V16.5 L1 15Z" fill="#e6c55d"/><path d="M6 1 H9.5 L13 2.5 V15.5 H6Z" fill="#f7e696"/><path d="M1 2.5 L6 1 V16.5 L1 15Z" fill="none" stroke="#d2b455" stroke-width=".6"/><rect x="7.5" y="3.5" width="7" height="10.5" fill="#fff" stroke="#9ab" stroke-width=".6"/><path d="M8.7 6H13.3 M8.7 8H13.3 M8.7 10H13.3 M8.7 12H13.3" stroke="#6d8fc8" stroke-width=".8"/></svg>
<div class="t" style="left:396.5px;top:378.8px;font-size:12px;line-height:16px;color:#1a1a1a;letter-spacing:0.014px;">Dokumenter</div>
<svg style="left:376px;top:399px" width="16" height="17" viewBox="0 0 16 17"><path d="M1 2.5 L6 1 V16.5 L1 15Z" fill="#e6c55d"/><path d="M6 1 H9.5 L13 2.5 V15.5 H6Z" fill="#f7e696"/><path d="M1 2.5 L6 1 V16.5 L1 15Z" fill="none" stroke="#d2b455" stroke-width=".6"/><path d="M9.5 12.5 V3 Q13.5 5 12 9.5" fill="none" stroke="#2f86d8" stroke-width="1.6"/><ellipse cx="8.5" cy="12.8" rx="2" ry="1.5" fill="#2f86d8"/></svg>
<div class="t" style="left:396.5px;top:399.7px;font-size:12px;line-height:16px;color:#1a1a1a;letter-spacing:0.033px;">Musik</div>
<svg style="left:376px;top:420px" width="16" height="17" viewBox="0 0 16 17"><path d="M1 2.5 L6 1 V16.5 L1 15Z" fill="#e6c55d"/><path d="M6 1 H9.5 L13 2.5 V15.5 H6Z" fill="#f7e696"/><path d="M1 2.5 L6 1 V16.5 L1 15Z" fill="none" stroke="#d2b455" stroke-width=".6"/><path d="M9 6 H13 V10 H15.2 L11 15 L6.8 10 H9Z" fill="#2f8de0" stroke="#1c6bb8" stroke-width=".5"/></svg>
<div class="t" style="left:396.5px;top:420.7px;font-size:12px;line-height:16px;color:#1a1a1a;letter-spacing:-0.227px;">Overførsler</div>
<svg style="left:376px;top:441px" width="16" height="17" viewBox="0 0 16 17"><path d="M1 2.5 L6 1 V16.5 L1 15Z" fill="#e6c55d"/><path d="M6 1 H9.5 L13 2.5 V15.5 H6Z" fill="#f7e696"/><path d="M1 2.5 L6 1 V16.5 L1 15Z" fill="none" stroke="#d2b455" stroke-width=".6"/><rect x="7.5" y="8" width="8" height="7" fill="#2a63c8" stroke="#1d3f88" stroke-width=".6"/><rect x="8.5" y="9" width="6" height="3" fill="#5fa0ee"/></svg>
<div class="t" style="left:396.5px;top:441.7px;font-size:12px;line-height:16px;color:#1a1a1a;letter-spacing:-0.236px;">Skrivebord</div>
<svg style="left:376px;top:462px" width="16" height="17" viewBox="0 0 16 17"><path d="M1 2.5 L6 1 V16.5 L1 15Z" fill="#e6c55d"/><path d="M6 1 H9.5 L13 2.5 V15.5 H6Z" fill="#f7e696"/><path d="M1 2.5 L6 1 V16.5 L1 15Z" fill="none" stroke="#d2b455" stroke-width=".6"/><rect x="7.5" y="4" width="7.5" height="10.5" fill="#4a4a4a"/><rect x="9" y="5" width="4.5" height="3.5" fill="#7db0e0"/><rect x="9" y="9.8" width="4.5" height="3.5" fill="#8dc06a"/><path d="M8.2 4.5V14 M14.3 4.5V14" stroke="#ddd" stroke-width=".7" stroke-dasharray="1 1"/></svg>
<div class="t" style="left:396.5px;top:462.7px;font-size:12px;line-height:16px;color:#1a1a1a;letter-spacing:-0.235px;">Videoer</div>
<svg style="left:375px;top:482px" width="17" height="18" viewBox="0 0 17 18"><rect x="2" y="0.5" width="3.4" height="3.4" fill="#27aee8"/><rect x="6" y="0.5" width="3.4" height="3.4" fill="#27aee8"/><rect x="2" y="4.5" width="3.4" height="3.4" fill="#27aee8"/><rect x="6" y="4.5" width="3.4" height="3.4" fill="#27aee8"/><path d="M2 10 H14 L16 12.5 V16.5 H0.5 V12.5Z" fill="#8d99a6"/><rect x="0.5" y="12.5" width="15.5" height="4" fill="#5c6772"/><rect x="2" y="14" width="8" height="1.2" fill="#2ec2f0"/></svg>
<div class="t" style="left:396.5px;top:483.7px;font-size:12px;line-height:16px;color:#1a1a1a;letter-spacing:-0.246px;">Lokal disk (C:)</div>
<svg style="left:375px;top:506px" width="17" height="13" viewBox="0 0 17 13"><path d="M2.5 2.5 Q3 1 4.5 1 H12.5 Q14 1 14.5 2.5 L16.5 6.5 V10.5 Q16.5 12 15 12 H2 Q.5 12 .5 10.5 V6.5Z" fill="#e6e6e6" stroke="#8b8b8b" stroke-width=".8"/><path d="M.8 6.5 H16.2" stroke="#9a9a9a" stroke-width=".8"/><rect x="11" y="8" width="4" height="2.3" fill="#7a8a7a"/></svg>
<div class="t" style="left:396.5px;top:504.7px;font-size:12px;line-height:16px;color:#1a1a1a;letter-spacing:-0.516px;">TOSHIBA EXT (I:)</div>
<svg style="left:366px;top:545px;overflow:hidden" width="10" height="2" viewBox="0 0 10 2"><ellipse cx="5" cy="2.2" rx="4" ry="1.8" fill="#aebbd0"/></svg>
<div class="abs" style="left:519.5px;top:256.5px;width:104.5px;height:115px;background:#f6f6f6;border:1px solid #dcdcdc"></div>
<svg style="left:525px;top:286px;overflow:hidden;box-shadow:1px 1px 3px rgba(0,0,0,.35)" width="90.5" height="64" viewBox="0 0 90.5 64">
<defs><linearGradient id="ts0" x1="0" y1="0" x2="0" y2="1"><stop offset="0" stop-color="#d3dfeb"/><stop offset=".3" stop-color="#eef1f3"/><stop offset=".7" stop-color="#e4e8ea"/><stop offset=".85" stop-color="#c3d0da"/><stop offset="1" stop-color="#c9d6de"/></linearGradient>
<linearGradient id="tf0" x1="0" y1="0" x2="0" y2="1"><stop offset="0" stop-color="#b48fbe"/><stop offset=".35" stop-color="#a074a8"/><stop offset="1" stop-color="#8a5c91"/></linearGradient>
<filter id="tb0"><feGaussianBlur stdDeviation="1.8 1"/></filter>
<filter id="tn0" color-interpolation-filters="sRGB" x="0" y="0" width="100%" height="100%"><feTurbulence type="fractalNoise" baseFrequency="0.22 0.6" numOctaves="2" seed="5"/><feColorMatrix type="matrix" values="0 0 0 0 0.40  0 0 0 0 0.25  0 0 0 0 0.44  4.5 0 0 0 -2.2"/></filter>
<filter id="tl0" color-interpolation-filters="sRGB" x="0" y="0" width="100%" height="100%"><feTurbulence type="fractalNoise" baseFrequency="0.3 0.7" numOctaves="2" seed="8"/><feColorMatrix type="matrix" values="0 0 0 0 0.80  0 0 0 0 0.64  0 0 0 0 0.84  0 4.5 0 0 -2.35"/></filter></defs>
<rect width="91" height="31" fill="url(#ts0)"/>
<g filter="url(#tb0)"><path d="M0 3 Q14 1 28 8 Q16 16 0 14Z" fill="#a6c1e0"/><path d="M46 0 H82 Q74 8 60 10 Q52 6 46 0Z" fill="#a9c2de"/><path d="M40 14 Q50 12 58 16 Q48 18 40 14Z" fill="#b9cbdf"/><ellipse cx="36" cy="6" rx="9" ry="5" fill="#f6f7f8"/><ellipse cx="20" cy="20" rx="22" ry="3.5" fill="#f2f3f4"/><ellipse cx="85" cy="5" rx="7" ry="4" fill="#f3f4f5"/></g>
<rect x="0" y="30.5" width="91" height="33.5" fill="url(#tf0)"/>
<g fill="#3f6232"><ellipse cx="4" cy="28.5" rx="2.5" ry="2"/><ellipse cx="14" cy="29" rx="4" ry="1.6"/><ellipse cx="24" cy="28.8" rx="4" ry="1.7"/><ellipse cx="33" cy="29" rx="3" ry="1.5"/><ellipse cx="41" cy="28.3" rx="3" ry="2.2"/><ellipse cx="50" cy="28.8" rx="4" ry="1.8"/><ellipse cx="59" cy="28.5" rx="3.5" ry="2"/><ellipse cx="67" cy="28.8" rx="3.5" ry="1.8"/><rect x="0" y="29" width="72" height="1.6"/></g>
<rect x="0" y="30.4" width="72" height="1" fill="#8e9f78"/>
<path d="M72 31 Q70 22 75 18 Q78 10 85 11 Q91 10 91 14 V40 Q84 39 79 35 Q73 36 72 31Z" fill="#3d5e24"/>
<path d="M75 21 Q80 12 87 14 Q85 21 79 23Z" fill="#557d30"/><path d="M73 27 Q77 24 80 28 Q77 32 73 31Z" fill="#4d7529"/><path d="M82 37 Q87 31 91 31 V40 Q86 39 82 37Z" fill="#2a4519"/>
<path d="M54 36.5 Q70 40 91 45 V41 Q72 37 58 34.5Z" fill="#6f4a7b" opacity=".85"/>
<path d="M43 37 Q46 43 60 47 Q76 51 91 55 V51 Q74 46 62 43 Q50 40 47 36Z" fill="#6c6b50" opacity=".8"/>
<rect x="0" y="30.5" width="91" height="33.5" filter="url(#tn0)" opacity=".75"/>
<rect x="0" y="30.5" width="91" height="33.5" filter="url(#tl0)" opacity=".6"/>
</svg>
<svg style="left:648px;top:286px;overflow:hidden;box-shadow:1px 1px 3px rgba(0,0,0,.35)" width="90.5" height="64" viewBox="0 0 90.5 64">
<defs><linearGradient id="ts1" x1="0" y1="0" x2="0" y2="1"><stop offset="0" stop-color="#d3dfeb"/><stop offset=".3" stop-color="#eef1f3"/><stop offset=".7" stop-color="#e4e8ea"/><stop offset=".85" stop-color="#c3d0da"/><stop offset="1" stop-color="#c9d6de"/></linearGradient>
<linearGradient id="tf1" x1="0" y1="0" x2="0" y2="1"><stop offset="0" stop-color="#b48fbe"/><stop offset=".35" stop-color="#a074a8"/><stop offset="1" stop-color="#8a5c91"/></linearGradient>
<filter id="tb1"><feGaussianBlur stdDeviation="1.8 1"/></filter>
<filter id="tn1" color-interpolation-filters="sRGB" x="0" y="0" width="100%" height="100%"><feTurbulence type="fractalNoise" baseFrequency="0.22 0.6" numOctaves="2" seed="5"/><feColorMatrix type="matrix" values="0 0 0 0 0.40  0 0 0 0 0.25  0 0 0 0 0.44  4.5 0 0 0 -2.2"/></filter>
<filter id="tl1" color-interpolation-filters="sRGB" x="0" y="0" width="100%" height="100%"><feTurbulence type="fractalNoise" baseFrequency="0.3 0.7" numOctaves="2" seed="8"/><feColorMatrix type="matrix" values="0 0 0 0 0.80  0 0 0 0 0.64  0 0 0 0 0.84  0 4.5 0 0 -2.35"/></filter></defs>
<rect width="91" height="31" fill="url(#ts1)"/>
<g filter="url(#tb1)"><path d="M0 3 Q14 1 28 8 Q16 16 0 14Z" fill="#a6c1e0"/><path d="M46 0 H82 Q74 8 60 10 Q52 6 46 0Z" fill="#a9c2de"/><path d="M40 14 Q50 12 58 16 Q48 18 40 14Z" fill="#b9cbdf"/><ellipse cx="36" cy="6" rx="9" ry="5" fill="#f6f7f8"/><ellipse cx="20" cy="20" rx="22" ry="3.5" fill="#f2f3f4"/><ellipse cx="85" cy="5" rx="7" ry="4" fill="#f3f4f5"/></g>
<rect x="0" y="30.5" width="91" height="33.5" fill="url(#tf1)"/>
<g fill="#3f6232"><ellipse cx="4" cy="28.5" rx="2.5" ry="2"/><ellipse cx="14" cy="29" rx="4" ry="1.6"/><ellipse cx="24" cy="28.8" rx="4" ry="1.7"/><ellipse cx="33" cy="29" rx="3" ry="1.5"/><ellipse cx="41" cy="28.3" rx="3" ry="2.2"/><ellipse cx="50" cy="28.8" rx="4" ry="1.8"/><ellipse cx="59" cy="28.5" rx="3.5" ry="2"/><ellipse cx="67" cy="28.8" rx="3.5" ry="1.8"/><rect x="0" y="29" width="72" height="1.6"/></g>
<rect x="0" y="30.4" width="72" height="1" fill="#8e9f78"/>
<path d="M72 31 Q70 22 75 18 Q78 10 85 11 Q91 10 91 14 V40 Q84 39 79 35 Q73 36 72 31Z" fill="#3d5e24"/>
<path d="M75 21 Q80 12 87 14 Q85 21 79 23Z" fill="#557d30"/><path d="M73 27 Q77 24 80 28 Q77 32 73 31Z" fill="#4d7529"/><path d="M82 37 Q87 31 91 31 V40 Q86 39 82 37Z" fill="#2a4519"/>
<path d="M54 36.5 Q70 40 91 45 V41 Q72 37 58 34.5Z" fill="#6f4a7b" opacity=".85"/>
<path d="M43 37 Q46 43 60 47 Q76 51 91 55 V51 Q74 46 62 43 Q50 40 47 36Z" fill="#6c6b50" opacity=".8"/>
<rect x="0" y="30.5" width="91" height="33.5" filter="url(#tn1)" opacity=".75"/>
<rect x="0" y="30.5" width="91" height="33.5" filter="url(#tl1)" opacity=".6"/>
</svg>
<div class="t" style="left:567.5px;top:353.5px;font-size:12px;line-height:16px;color:#1a1a1a;">0</div>
<div class="t" style="left:690.5px;top:353.5px;font-size:12px;line-height:16px;color:#1a1a1a;">1</div>
<div class="t" style="left:475px;top:559.8px;font-size:12px;line-height:16px;color:#1a1a1a;letter-spacing:-0.065px;">Filnavn:</div>
<div class="abs" style="left:521px;top:557px;width:274px;height:23px;background:#fff;border:1px solid #ababab"></div>
<div class="t" style="left:526px;top:560px;font-size:12px;line-height:16px;color:#1a1a1a;">0</div>
<svg style="left:781px;top:565px" width="10" height="8" viewBox="0 0 10 8"><path d="M1 1.5 L5 5.8 L9 1.5" fill="none" stroke="#444" stroke-width="1.7"/></svg>
<div class="abs" style="left:807.5px;top:556.5px;width:187.5px;height:22.5px;background:linear-gradient(#dcedfc,#c8e1f9);border:1px solid #4a9be0"></div>
<div class="t" style="left:811px;top:559.5px;font-size:12px;line-height:16px;color:#111;letter-spacing:-0.290px;">Photoshop (*.PSD;*.PDD)</div>
<svg style="left:980px;top:564px" width="10" height="8" viewBox="0 0 10 8"><path d="M1 1.5 L5 5.8 L9 1.5" fill="none" stroke="#333" stroke-width="1.7"/></svg>
<div class="abs" style="left:645px;top:591.5px;width:13px;height:12.5px;background:#fff;border:1px solid #6a6a6a"></div>
<div class="t" style="left:661px;top:589px;font-size:12px;line-height:16px;color:#1c5a9e;letter-spacing:-0.267px;">Image Sequence</div>
<div class="abs" style="left:807.5px;top:586px;width:86.5px;height:24px;background:linear-gradient(#f0f0f0,#e6e6e6);border:1px solid #3c9ae0"></div>
<div class="t" style="left:839.5px;top:590px;font-size:12px;line-height:16px;color:#111;letter-spacing:0.216px;">Åbn</div>
<div class="abs" style="left:908px;top:586px;width:86px;height:24px;background:linear-gradient(#f0f0f0,#e6e6e6);border:1px solid #adadad"></div>
<div class="t" style="left:928px;top:590px;font-size:12px;line-height:16px;color:#111;letter-spacing:0.184px;">Annuller</div>
<svg style="left:999px;top:611px" width="10" height="10" viewBox="0 0 10 10"><g fill="#b5b5b5"><rect x="7" y="1" width="2" height="2"/><rect x="4" y="4" width="2" height="2"/><rect x="7" y="4" width="2" height="2"/><rect x="1" y="7" width="2" height="2"/><rect x="4" y="7" width="2" height="2"/><rect x="7" y="7" width="2" height="2"/></g></svg>
<!-- DROPDOWN LIST -->
<div class="abs" style="left:806.5px;top:104px;width:562px;height:451.5px;background:#fff;border:1px solid #3b7fc4;border-right:none;box-shadow:0 2px 4px rgba(0,0,0,.35)"></div>
<div class="abs" style="left:807.5px;top:180px;width:560px;height:15px;background:#3394f6"></div>
<div class="t" style="left:809.9px;top:104.5px;font-size:12px;line-height:16px;color:#111;letter-spacing:-0.290px;">Photoshop (*.PSD;*.PDD)</div>
<div class="t" style="left:809.9px;top:119.5px;font-size:12px;line-height:16px;color:#111;letter-spacing:-0.221px;">Large Document Format (*.PSB)</div>
<div class="t" style="left:809.9px;top:134.5px;font-size:12px;line-height:16px;color:#111;letter-spacing:-0.346px;">3D Studio (*.3DS)</div>
<div class="t" style="left:809.9px;top:149.5px;font-size:12px;line-height:16px;color:#111;letter-spacing:-0.059px;">Audio (*.AAC;*.AC3;*.M2A;*.M4A;*.MP2;*.MP3;*.WMA;*.WM)</div>
<div class="t" style="left:809.9px;top:164.5px;font-size:12px;line-height:16px;color:#111;letter-spacing:-0.415px;">BMP (*.BMP;*.RLE;*.DIB)</div>
<div class="t" style="left:809.9px;top:179.5px;font-size:12px;line-height:16px;color:#fff;letter-spacing:-0.472px;width:556px;overflow:hidden">Camera Raw (*.TIF;*.CRW;*.NEF;*.RAF;*.ORF;*.MRW;*.DCR;*.MOS;*.RAW;*.PEF;*.SRF;*.DNG;*.X3F;*.CR2;*.ERF;*.SR2)</div>
<div class="t" style="left:809.9px;top:194.5px;font-size:12px;line-height:16px;color:#111;letter-spacing:-0.390px;">Cineon (*.CIN;*.SDPX;*.DPX;*.FIDO)</div>
<div class="t" style="left:809.9px;top:209.5px;font-size:12px;line-height:16px;color:#111;letter-spacing:-0.313px;">Collada (*.DAE)</div>
<div class="t" style="left:809.9px;top:224.5px;font-size:12px;line-height:16px;color:#111;letter-spacing:-0.441px;">CompuServe GIF (*.GIF)</div>
<div class="t" style="left:809.9px;top:239.5px;font-size:12px;line-height:16px;color:#111;letter-spacing:-0.201px;">Dicom (*.DCM;*.DC3;*.DIC)</div>
<div class="t" style="left:809.9px;top:254.5px;font-size:12px;line-height:16px;color:#111;letter-spacing:-0.508px;">Photoshop EPS (*.EPS)</div>
<div class="t" style="left:809.9px;top:269.5px;font-size:12px;line-height:16px;color:#111;letter-spacing:-0.457px;">Photoshop DCS 1.0 (*.EPS)</div>
<div class="t" style="left:809.9px;top:284.5px;font-size:12px;line-height:16px;color:#111;letter-spacing:-0.457px;">Photoshop DCS 2.0 (*.EPS)</div>
<div class="t" style="left:809.9px;top:299.5px;font-size:12px;line-height:16px;color:#111;letter-spacing:-0.688px;">EPS TIFF Preview (*.EPS)</div>
<div class="t" style="left:809.9px;top:314.5px;font-size:12px;line-height:16px;color:#111;letter-spacing:-0.502px;">Flash 3D (*.FL3)</div>
<div class="t" style="left:809.9px;top:329.5px;font-size:12px;line-height:16px;color:#111;letter-spacing:-0.497px;">Generic EPS (*.AI3;*.AI4;*.AI5;*.AI6;*.AI7;*.AI8;*.PS;*.EPS;*.AI;*.EPSF;*.EPSP)</div>
<div class="t" style="left:809.9px;top:344.5px;font-size:12px;line-height:16px;color:#111;letter-spacing:-0.245px;">Google Earth 4 (*.KMZ)</div>
<div class="t" style="left:809.9px;top:359.5px;font-size:12px;line-height:16px;color:#111;letter-spacing:-0.389px;">IFF Format (*.IFF;*.TDI)</div>
<div class="t" style="left:809.9px;top:374.5px;font-size:12px;line-height:16px;color:#111;letter-spacing:-0.879px;">IGES (*.IGS;*.IGES)</div>
<div class="t" style="left:809.9px;top:389.5px;font-size:12px;line-height:16px;color:#111;letter-spacing:-0.962px;">JPEG (*.JPG;*.JPEG;*.JPE)</div>
<div class="t" style="left:809.9px;top:404.5px;font-size:12px;line-height:16px;color:#111;letter-spacing:-0.756px;">JPEG 2000 (*.JPF;*.JPX;*.JP2;*.J2C;*.J2K;*.JPC)</div>
<div class="t" style="left:809.9px;top:419.5px;font-size:12px;line-height:16px;color:#111;letter-spacing:-0.809px;">JPEG Stereo (*.JPS)</div>
<div class="t" style="left:809.9px;top:434.5px;font-size:12px;line-height:16px;color:#111;letter-spacing:0.047px;">Multi-Picture Format (*.MPO)</div>
<div class="t" style="left:809.9px;top:449.5px;font-size:12px;line-height:16px;color:#111;letter-spacing:-0.716px;">OpenEXR (*.EXR)</div>
<div class="t" style="left:809.9px;top:464.5px;font-size:12px;line-height:16px;color:#111;letter-spacing:-0.607px;">PCX (*.PCX)</div>
<div class="t" style="left:809.9px;top:479.5px;font-size:12px;line-height:16px;color:#111;letter-spacing:-0.373px;">Photoshop PDF (*.PDF;*.PDP)</div>
<div class="t" style="left:809.9px;top:494.5px;font-size:12px;line-height:16px;color:#111;letter-spacing:-0.219px;">Photoshop Raw (*.RAW)</div>
<div class="t" style="left:809.9px;top:509.5px;font-size:12px;line-height:16px;color:#111;letter-spacing:-0.266px;">Photoshop Touch (*.PSDX;*.PSDX)</div>
<div class="t" style="left:809.9px;top:524.5px;font-size:12px;line-height:16px;color:#111;letter-spacing:-0.353px;">PICT File (*.PCT;*.PICT)</div>
<div class="t" style="left:809.9px;top:539.5px;font-size:12px;line-height:16px;color:#111;letter-spacing:-0.565px;">Pixar (*.PXR)</div>
</body>
</html>
